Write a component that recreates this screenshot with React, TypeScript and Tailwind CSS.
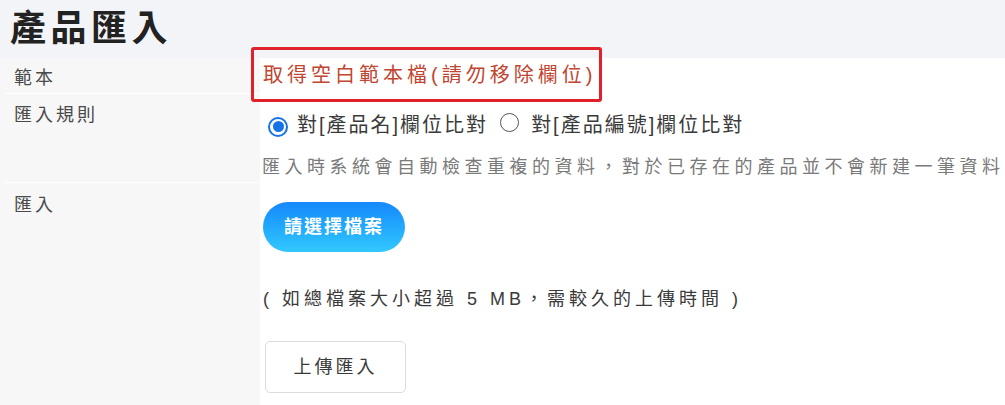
import React from "react";

const font = { fontFamily: '"Liberation Sans", "Noto Sans CJK TC", sans-serif' };

function Radio({ checked }: { checked: boolean }) {
  return checked ? (
    <span className="inline-flex h-[20px] w-[20px] shrink-0 items-center justify-center rounded-full border-[2px] border-[#1673e6] bg-white">
      <span className="h-[11px] w-[11px] rounded-full bg-[#1673e6]" />
    </span>
  ) : (
    <span className="inline-block h-[19px] w-[19px] shrink-0 rounded-full border-[1.5px] border-[#555] bg-white" />
  );
}

export default function App() {
  return (
    <div className="min-h-screen overflow-hidden bg-white text-[#333]" style={font}>
      <div className="flex h-[58px] items-center bg-[#f3f4f7] pl-[10px]">
        <h1 className="text-[36px] font-bold leading-none tracking-[4.5px] text-[#222]">產品匯入</h1>
      </div>
      <div className="flex min-h-[347px] flex-col">
        {/* row 1 */}
        <div className="flex h-[36px]">
          <div className="w-[260px] shrink-0 bg-[#f7f7f7]">
            <div className="ml-[4px] h-full border-b border-white pl-[10px] pt-[8px] text-[18px] leading-[24px] tracking-[3px] text-[#4a4a4a]">
              範本
            </div>
          </div>
          <div className="flex-1 pl-[3px] pt-[5px]">
            <a className="relative inline-block whitespace-nowrap text-[20px] leading-[24px] tracking-[4px] text-[#c1452f]">
              取得空白範本檔(請勿移除欄位)
              <span className="absolute -bottom-[15px] -left-[12px] -right-[6px] -top-[16px] rounded-[3px] border-[3px] border-[#e0202a]" />
            </a>
          </div>
        </div>
        {/* row 2 */}
        <div className="flex h-[89px]">
          <div className="w-[260px] shrink-0 bg-[#f7f7f7]">
            <div className="ml-[4px] h-full border-b border-white pl-[10px] pt-[9px] text-[18px] leading-[24px] tracking-[3px] text-[#4a4a4a]">
              匯入規則
            </div>
          </div>
          <div className="flex-1 overflow-hidden pl-[2px] pt-[19px]">
            <div className="flex items-center whitespace-nowrap text-[20px] leading-[24px] tracking-[2px] text-[#3a3a3a]">
              <span className="ml-[6px]"><Radio checked /></span>
              <span className="ml-[9px]">對[產品名]欄位比對</span>
              <span className="ml-[12px]"><Radio checked={false} /></span>
              <span className="ml-[12px]">對[產品編號]欄位比對</span>
            </div>
            <div className="mt-[18px] whitespace-nowrap text-[18px] leading-[24px] tracking-[4.5px] text-[#7a7a7a]">
              匯入時系統會自動檢查重複的資料，對於已存在的產品並不會新建一筆資料
            </div>
          </div>
        </div>
        {/* row 3 */}
        <div className="flex flex-1">
          <div className="w-[260px] shrink-0 bg-[#f7f7f7]">
            <div className="ml-[4px] pl-[10px] pt-[10px] text-[18px] leading-[24px] tracking-[3px] text-[#4a4a4a]">
              匯入
            </div>
          </div>
          <div className="flex-1 pl-[3px] pt-[19px]">
            <button className="flex h-[50px] w-[142px] items-center justify-center rounded-full bg-gradient-to-b from-[#1888fa] to-[#33c8fe] text-[18px] font-bold tracking-[2px] text-white">
              請選擇檔案
            </button>
            <div className="mt-[35px] whitespace-nowrap text-[18px] leading-[24px] tracking-[4px] text-[#3a3a3a]">
              ( 如總檔案大小超過 5 MB，需較久的上傳時間 )
            </div>
            <button className="ml-[2px] mt-[30px] flex h-[52px] w-[141px] items-center justify-center rounded-[5px] border border-[#dcdcdc] bg-white text-[18px] tracking-[3px] text-[#3a3a3a]">
              上傳匯入
            </button>
          </div>
        </div>
      </div>
    </div>
  );
}
